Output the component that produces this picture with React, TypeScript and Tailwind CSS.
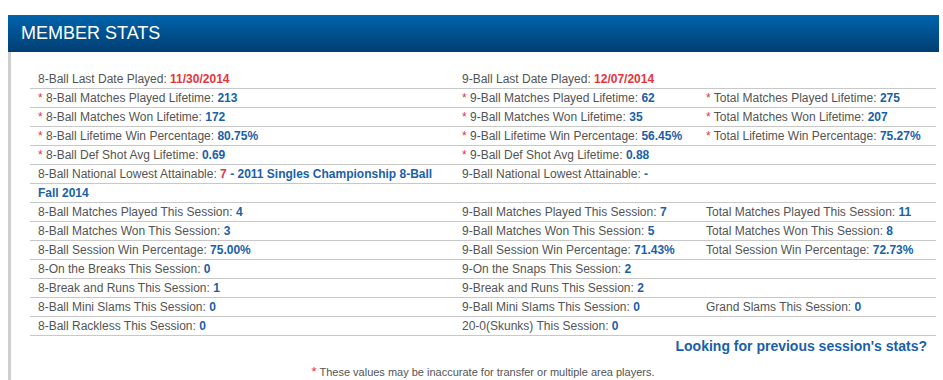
import React from "react";

type Cell = { star?: boolean; label: string; value?: React.ReactNode } | null;

const Val = ({ children }: { children: React.ReactNode }) => (
  <b className="font-bold text-[#1a5fa9]">{children}</b>
);
const Red = ({ children }: { children: React.ReactNode }) => (
  <b className="font-bold text-[#e8333a]">{children}</b>
);

const rows: Cell[][] = [
  [
    { label: "8-Ball Last Date Played: ", value: <Red>11/30/2014</Red> },
    { label: "9-Ball Last Date Played: ", value: <Red>12/07/2014</Red> },
    null,
  ],
  [
    { star: true, label: "8-Ball Matches Played Lifetime: ", value: <Val>213</Val> },
    { star: true, label: "9-Ball Matches Played Lifetime: ", value: <Val>62</Val> },
    { star: true, label: "Total Matches Played Lifetime: ", value: <Val>275</Val> },
  ],
  [
    { star: true, label: "8-Ball Matches Won Lifetime: ", value: <Val>172</Val> },
    { star: true, label: "9-Ball Matches Won Lifetime: ", value: <Val>35</Val> },
    { star: true, label: "Total Matches Won Lifetime: ", value: <Val>207</Val> },
  ],
  [
    { star: true, label: "8-Ball Lifetime Win Percentage: ", value: <Val>80.75%</Val> },
    { star: true, label: "9-Ball Lifetime Win Percentage: ", value: <Val>56.45%</Val> },
    { star: true, label: "Total Lifetime Win Percentage: ", value: <Val>75.27%</Val> },
  ],
  [
    { star: true, label: "8-Ball Def Shot Avg Lifetime: ", value: <Val>0.69</Val> },
    { star: true, label: "9-Ball Def Shot Avg Lifetime: ", value: <Val>0.88</Val> },
    null,
  ],
  [
    {
      label: "8-Ball National Lowest Attainable: ",
      value: (
        <>
          <Red>7</Red> <Val>- 2011 Singles Championship 8-Ball</Val>
        </>
      ),
    },
    { label: "9-Ball National Lowest Attainable: ", value: <Val>-</Val> },
    null,
  ],
  [{ label: "", value: <Val>Fall 2014</Val> }, null, null],
  [
    { label: "8-Ball Matches Played This Session: ", value: <Val>4</Val> },
    { label: "9-Ball Matches Played This Session: ", value: <Val>7</Val> },
    { label: "Total Matches Played This Session: ", value: <Val>11</Val> },
  ],
  [
    { label: "8-Ball Matches Won This Session: ", value: <Val>3</Val> },
    { label: "9-Ball Matches Won This Session: ", value: <Val>5</Val> },
    { label: "Total Matches Won This Session: ", value: <Val>8</Val> },
  ],
  [
    { label: "8-Ball Session Win Percentage: ", value: <Val>75.00%</Val> },
    { label: "9-Ball Session Win Percentage: ", value: <Val>71.43%</Val> },
    { label: "Total Session Win Percentage: ", value: <Val>72.73%</Val> },
  ],
  [
    { label: "8-On the Breaks This Session: ", value: <Val>0</Val> },
    { label: "9-On the Snaps This Session: ", value: <Val>2</Val> },
    null,
  ],
  [
    { label: "8-Break and Runs This Session: ", value: <Val>1</Val> },
    { label: "9-Break and Runs This Session: ", value: <Val>2</Val> },
    null,
  ],
  [
    { label: "8-Ball Mini Slams This Session: ", value: <Val>0</Val> },
    { label: "9-Ball Mini Slams This Session: ", value: <Val>0</Val> },
    { label: "Grand Slams This Session: ", value: <Val>0</Val> },
  ],
  [
    { label: "8-Ball Rackless This Session: ", value: <Val>0</Val> },
    { label: "20-0(Skunks) This Session: ", value: <Val>0</Val> },
    null,
  ],
];

function StatCell({ cell }: { cell: Cell }) {
  return (
    <div className="px-2 whitespace-nowrap">
      {cell && (
        <>
          {cell.star && <span className="text-[#e8333a]">* </span>}
          {cell.label}
          {cell.value}
        </>
      )}
    </div>
  );
}

export default function App() {
  return (
    <div
      className="w-[943px] h-[380px] bg-white pt-[15px] pl-2 pr-1 overflow-hidden"
      style={{ fontFamily: '"Liberation Sans", Arial, sans-serif' }}
    >
      <div className="h-[37px] bg-gradient-to-b from-[#0065ad] to-[#003e73] pl-[13px] text-[18px] leading-[37px] text-white">
        MEMBER STATS
      </div>

      <div className="border-l-[3px] border-[#cfcfcf] pl-[19px] pr-[3px] pt-[18px] h-[400px]">
        {/* stats table */}
        <div className="text-[12px] leading-[18px] text-[#545454]">
          {rows.map((row, i) => (
            <div
              key={i}
              className="grid grid-cols-[424px_244px_1fr] h-[19px] border-b border-[#c8c8c8]"
            >
              {row.map((cell, j) => (
                <StatCell key={j} cell={cell} />
              ))}
            </div>
          ))}
        </div>

        <div className="mt-[2px] pr-[9px] text-right text-[14px] leading-[16px] font-bold text-[#1a5fa9]">
          Looking for previous session's stats?
        </div>

        <div className="mt-[11px] text-center text-[11px] leading-[14px] text-[#545454]">
          <span className="text-[#e8333a] text-[13px]">*</span> These values may be inaccurate for transfer or multiple area players.
        </div>
      </div>
    </div>
  );
}
